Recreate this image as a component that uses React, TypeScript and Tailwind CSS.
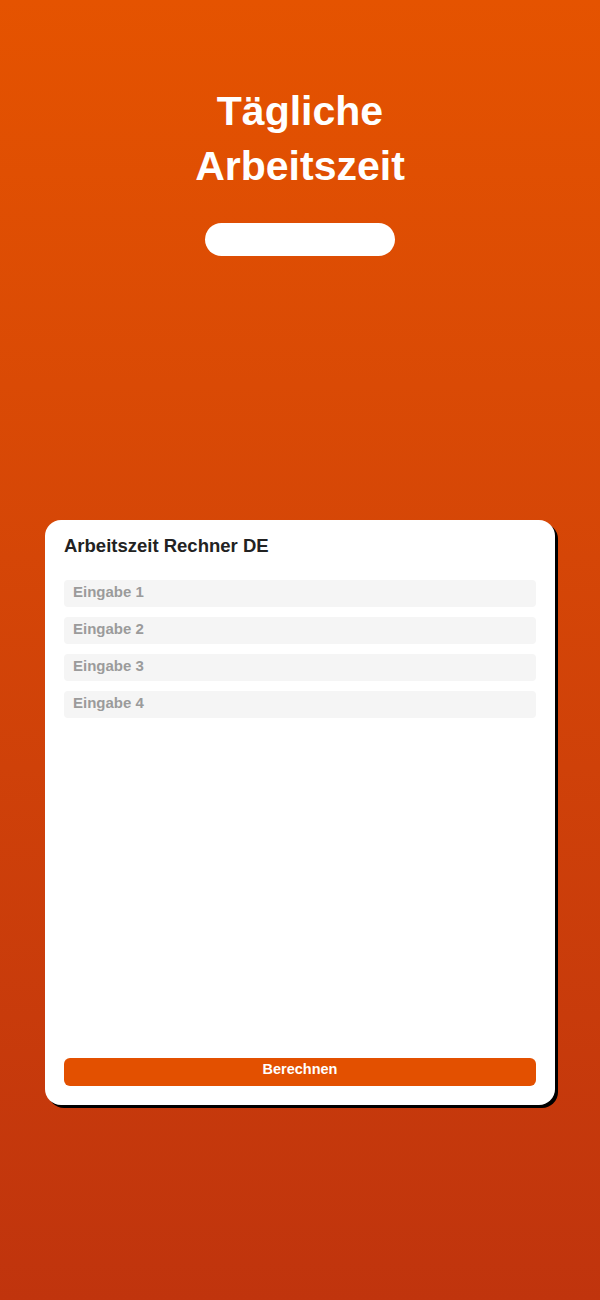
import { useState } from 'react';

const fields = ['Eingabe 1', 'Eingabe 2', 'Eingabe 3', 'Eingabe 4'];

export default function App() {
  const [values, setValues] = useState<string[]>(['', '', '', '']);

  return (
    <div className="min-h-[1300px] w-full bg-gradient-to-b from-[#e55300] to-[#c0340d] font-['Liberation_Sans',Arial,sans-serif] flex flex-col items-center">
      <h1 className="pt-[84px] text-center text-[41px] leading-[55px] font-bold text-white">
        Tägliche
        <br />
        Arbeitszeit
      </h1>
      <div className="mt-[29px] h-[33px] w-[190px] rounded-full bg-white" />

      <div className="mt-[264px] flex h-[585px] w-[510px] flex-col rounded-[16px] bg-white px-[19px] pb-[19px] pt-[14px] shadow-[3px_3px_0_#000]">
        <h2 className="text-[18.5px] leading-[24px] font-bold text-[#222]">Arbeitszeit Rechner DE</h2>
        <div className="mt-[22px] flex flex-col gap-[10px]">
          {fields.map((label, i) => (
            <input
              key={label}
              value={values[i]}
              onChange={(e) => {
                const next = [...values];
                next[i] = e.target.value;
                setValues(next);
              }}
              placeholder={label}
              className="w-full rounded-[4px] bg-[#f5f5f5] px-[9px] pt-[2px] pb-[5px] text-[15px] leading-[20px] font-bold text-[#333] outline-none placeholder:text-[#9b9b9b]"
            />
          ))}
        </div>
        <button className="mt-auto h-[28px] w-full rounded-[6px] bg-[#e35000] pt-px text-[14.5px] leading-[20px] font-bold text-white flex items-start justify-center">
          Berechnen
        </button>
      </div>
    </div>
  );
}
